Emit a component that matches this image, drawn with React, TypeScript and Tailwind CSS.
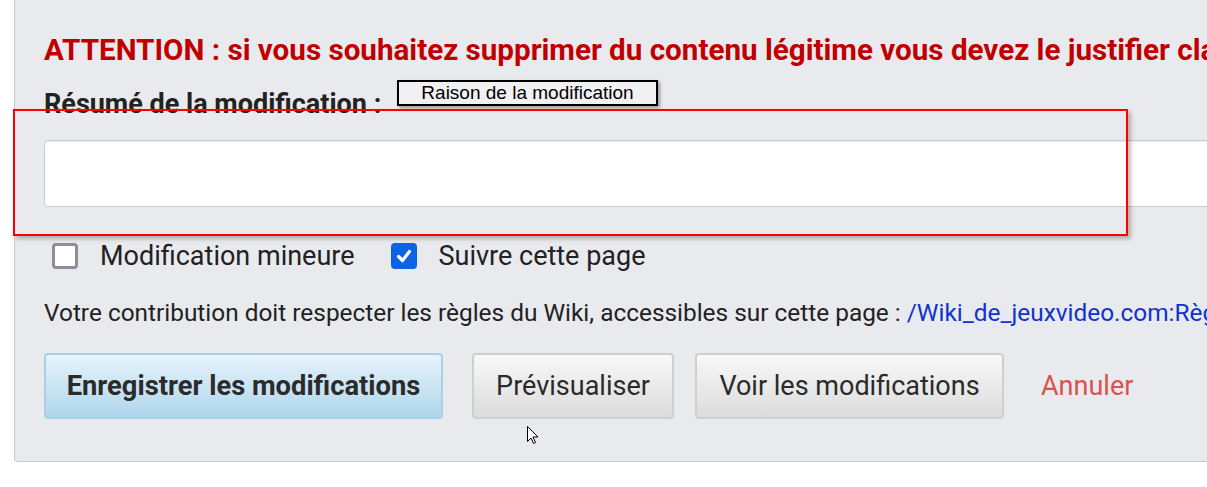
export default function App() {
  return (
    <div
      className="relative w-[1207px] h-[487px] overflow-hidden bg-white"
      style={{ fontFamily: "Roboto, 'Liberation Sans', sans-serif" }}
    >
      <div className="ml-[14px] w-[1300px] border-l border-b border-[#c8c9cc] rounded-bl-[4px] bg-[#e9eaee] pl-[29px] pt-[34px] pb-[42px]">
        <div className="whitespace-nowrap text-[29.6px] leading-[32px] font-bold text-[#c00000]">
          ATTENTION : si vous souhaitez supprimer du contenu légitime vous devez le justifier clairement
        </div>
        <div className="mt-[24px] whitespace-nowrap text-[27px] leading-[28px] font-bold text-[#222]">
          Résumé de la modification :
        </div>
        <div className="mt-[22px] h-[67px] w-[1250px] rounded-[4px] border border-[#cccccc] bg-white shadow-[inset_0_1px_2px_rgba(0,0,0,0.08)]" />
        <div className="mt-[35px] ml-[8px] flex items-center">
          <Checkbox checked={false} />
          <span className="ml-[22px] text-[27px] leading-[28px] text-[#222]">Modification mineure</span>
          <div className="ml-[36px]">
            <Checkbox checked />
          </div>
          <span className="ml-[22px] text-[27px] leading-[28px] text-[#222]">Suivre cette page</span>
        </div>
        <div className="mt-[29px] whitespace-nowrap text-[24.4px] leading-[28px] text-[#222]">
          Votre contribution doit respecter les règles du Wiki, accessibles sur cette page :{" "}
          <span className="text-[#1033c9]">/Wiki_de_jeuxvideo.com:Règles</span>
        </div>
        <div className="mt-[26px] flex items-center">
          <button className="h-[66px] w-[399px] rounded-[4px] border-2 border-[#a9d0e6] bg-gradient-to-b from-[#e6f3fb] to-[#b0d6ec] text-[27.3px] font-bold text-[#2b2b2b]">
            Enregistrer les modifications
          </button>
          <button className="ml-[29px] h-[66px] w-[202px] rounded-[4px] border-2 border-[#cfcfcf] bg-gradient-to-b from-[#f8f8f8] to-[#dcdcdc] text-[27px] text-[#2b2b2b]">
            Prévisualiser
          </button>
          <button className="ml-[21px] h-[66px] w-[309px] rounded-[4px] border-2 border-[#cfcfcf] bg-gradient-to-b from-[#f8f8f8] to-[#dcdcdc] text-[27px] text-[#2b2b2b]">
            Voir les modifications
          </button>
          <span className="ml-[37px] text-[27px] text-[#d9534f]">Annuler</span>
        </div>
      </div>

      {/* tooltip */}
      <div
        className="absolute left-[397px] top-[80px] flex h-[26px] w-[261px] items-center justify-center border-2 border-black bg-[#f1f1f3] text-[19px] leading-[20px] text-black shadow-[2px_2px_3px_rgba(0,0,0,0.35)]"
        style={{ fontFamily: "'Liberation Sans', Arial, sans-serif" }}
      >
        Raison de la modification
      </div>

      {/* red highlight */}
      <div className="absolute left-[13px] top-[109px] h-[127px] w-[1115px] border-2 border-[#ff0000] shadow-[3px_3px_4px_rgba(0,0,0,0.25)]" />

      {/* mouse cursor */}
      <svg className="absolute left-[527px] top-[426px]" width="12" height="19" viewBox="0 0 12 19">
        <path d="M0.5 0.5 L0.5 15.5 L4 12 L6.5 17.5 L8.5 16.5 L6 11 L11 11 Z" fill="white" stroke="black" strokeWidth="1" />
      </svg>
    </div>
  )
}

function Checkbox({ checked }: { checked: boolean }) {
  if (checked) {
    return (
      <div className="flex h-[26px] w-[26px] items-center justify-center rounded-[4px] bg-[#0b63e5]">
        <svg width="18" height="18" viewBox="0 0 18 18">
          <path d="M3.5 9.5 L7.5 13.5 L14.5 4.5" fill="none" stroke="white" strokeWidth="3.2" strokeLinecap="round" strokeLinejoin="round" />
        </svg>
      </div>
    )
  }
  return <div className="h-[26px] w-[26px] rounded-[4px] border-[3px] border-[#8e8e99] bg-white" />
}
